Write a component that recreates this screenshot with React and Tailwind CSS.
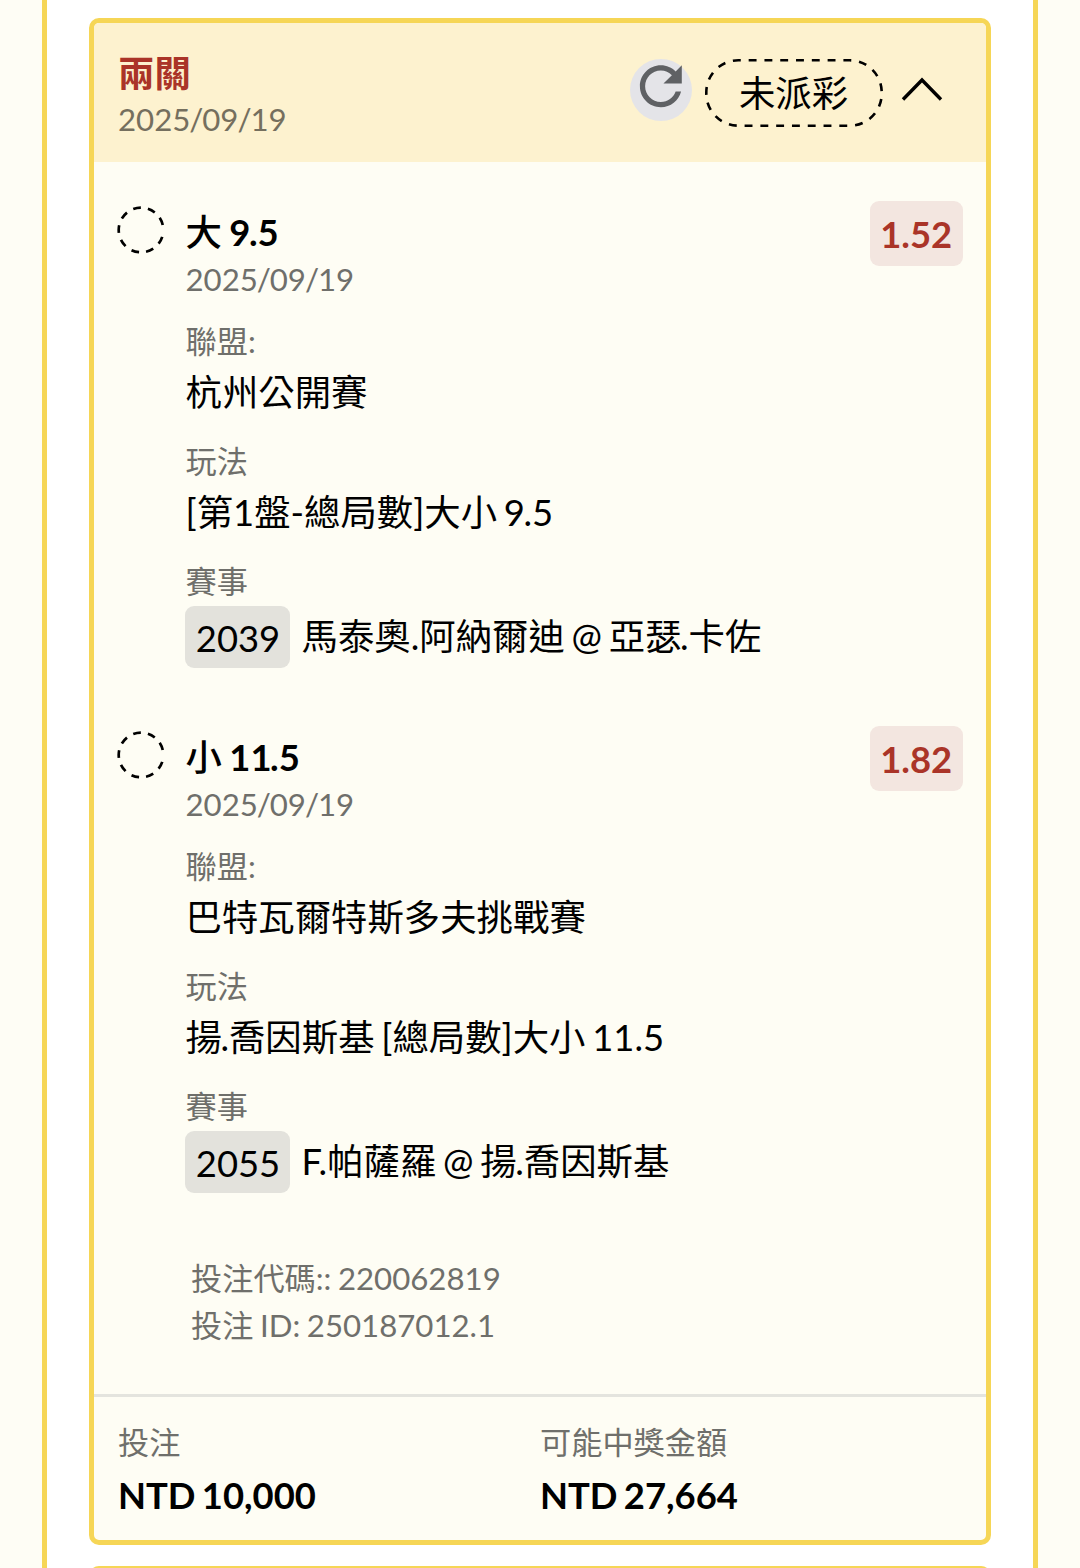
const YELLOW_BORDER = "border-[#f6d656]";

// "|" in a text marks a kerning point.
const bets = [
  {
    side: "大",
    line: "9|.5",
    date: "2025/09/19",
    odds: "1.52",
    league: "杭州公開賽",
    market: "[第1盤-總局數]大小 9|.5",
    code: "2039",
    match: "馬泰奧.阿納爾迪 @ 亞瑟|.卡佐",
  },
  {
    side: "小",
    line: "11|.5",
    date: "2025/09/19",
    odds: "1.82",
    league: "巴特瓦爾特斯多夫挑戰賽",
    market: "揚|.喬因斯基 [總局數]大小 11.5",
    code: "2055",
    match: "F.帕薩羅 @ 揚|.喬因斯基",
  },
];

function Kerned({ text }) {
  return text.split("|").map((part, i) => (
    <span key={i} className={i > 0 ? "-ml-[1.5px]" : ""}>
      {part}
    </span>
  ));
}

function DateText({ value }) {
  return value.split("/").map((part, i) => (
    <span key={i}>
      {i > 0 && <span className="-mx-[1.1px]">/</span>}
      {part}
    </span>
  ));
}

function RefreshIcon() {
  return (
    <svg viewBox="0 0 62 62" className="-mt-[6px] h-[62px] w-[62px]">
      <circle cx="31" cy="31" r="31" fill="#e4e4e8" />
      <path
        transform="translate(-0.6 -4.2) scale(2.62)"
        fill="#5f6164"
        d="M17.65 6.35C16.2 4.9 14.21 4 12 4c-4.42 0-7.99 3.58-7.99 8s3.57 8 7.99 8c3.73 0 6.84-2.55 7.73-6h-2.08c-.82 2.33-3.04 4-5.65 4-3.31 0-6-2.69-6-6s2.69-6 6-6c1.66 0 3.14.69 4.22 1.78L13 11h7V4l-2.35 2.35z"
      />
    </svg>
  );
}

function PendingRing() {
  return (
    <svg viewBox="0 0 48 48" className="-mt-[0.5px] -ml-[0.5px] h-12 w-12">
      <circle
        cx="24"
        cy="24"
        r="22.3"
        fill="none"
        stroke="#000"
        strokeWidth="2.7"
        pathLength="360"
        strokeDasharray="0 18 20 18.6 20 18.6 20 18.6 20 18.6 20 18.6 20 18.6 20 18.6 20 18.6 20 40"
      />
    </svg>
  );
}

function StatusPill() {
  return (
    <div className="relative ml-[13px] flex h-[68px] w-[178px] items-center justify-center">
      <svg viewBox="0 0 178 68" className="absolute inset-0 h-full w-full">
        <rect x="1.3" y="1.3" width="175.4" height="65.4" rx="32" fill="none" stroke="#000" strokeWidth="2.6" pathLength="432" strokeDasharray="8 8" strokeDashoffset="5.5" />
      </svg>
      <span className="relative text-[36.4px] leading-[47px]">未派彩</span>
    </div>
  );
}

function Field({ label, children }) {
  return (
    <div>
      <div className="text-[31.2px] leading-[46px] text-[#6f6f6b]">{label}</div>
      {children}
    </div>
  );
}

function Bet({ bet }) {
  return (
    <div className="flex h-[525px] items-start pr-[23px] pl-[23px]">
      <PendingRing />
      <div className="mt-[2px] ml-[21px] flex-1">
        <div className="text-[36.4px] leading-[48px] font-bold [word-spacing:-1.4px]">
          <span className="font-medium">{bet.side}</span> <Kerned text={bet.line} />
        </div>
        <div className="text-[31.2px] leading-[46px] text-[#6f6f6b]">
          <DateText value={bet.date} />
        </div>
        <div className="mt-[16px] flex flex-col gap-[18px] whitespace-nowrap">
          <Field label="聯盟:">
            <div className="pt-px text-[36.4px] leading-[55px]">{bet.league}</div>
          </Field>
          <Field label="玩法">
            <div className="pt-px text-[36.4px] leading-[55px]">
              <Kerned text={bet.market} />
            </div>
          </Field>
          <Field label="賽事">
            <div className="mt-[1.5px] flex h-[62px] items-center text-[36.4px]">
              <span className="mr-[11.5px] -ml-[0.5px] h-[62px] w-[105px] rounded-[9px] bg-[#e3e2dc] pl-px text-center leading-[65px]">{bet.code}</span>
              <span className="leading-[63px]">
                <Kerned text={bet.match} />
              </span>
            </div>
          </Field>
        </div>
      </div>
      <div className="-mt-[5px] h-[65px] w-[93.5px] rounded-[9px] bg-[#f3e6e0] text-center text-[36.4px] leading-[67px] font-bold text-[#aa3428]">
        {bet.odds}
      </div>
    </div>
  );
}

function Total({ label, value }) {
  return (
    <div className="w-[422px]">
      <div className="text-[31.2px] leading-[47px] text-[#6f6f6b]">{label}</div>
      <div className="mt-[2px] text-[36.4px] leading-[55px] font-bold">{value}</div>
    </div>
  );
}

export default function App() {
  return (
    <div className="h-[1568px] overflow-hidden bg-[#fefdf5] px-[42px] font-['Lato','Noto_Sans_CJK_TC',sans-serif] text-black [word-spacing:-2.6px]">
      <div className={`h-full overflow-hidden border-x-[5px] ${YELLOW_BORDER} bg-white px-[42px] pt-[18px]`}>
        <div className={`h-[1527px] overflow-hidden rounded-[10px] border-[5px] ${YELLOW_BORDER} bg-[#fefdf4]`}>
          <div className="flex h-[139px] items-start bg-[#fdf2cf] pt-7 pr-[43.5px] pl-6">
            <div className="flex-1">
              <div className="text-[36.4px] leading-[45px] font-bold text-[#aa3428]">兩關</div>
              <div className="text-[31.2px] leading-[46px] text-[#756f5e]">
                <DateText value="2025/09/19" />
              </div>
            </div>
            <div className="mt-[8px] flex items-center">
              <RefreshIcon />
              <StatusPill />
              <svg viewBox="0 0 42 26" className="-mt-[8px] ml-[18px] h-[26px] w-[42px]">
                <path d="M2 23.5 21 4 40 23.5" fill="none" stroke="#000" strokeWidth="3.4" />
              </svg>
            </div>
          </div>
          <div className="flex h-[1232px] flex-col pt-11">
            {bets.map((bet) => (
              <Bet key={bet.code} bet={bet} />
            ))}
            <div className="-mt-px pl-[97px] text-[31.2px] leading-[46.5px] text-[#6f6f6b] [word-spacing:-1.4px]">
              <div>投注代碼:: 220062819</div>
              <div>投注 ID: 250187012.1</div>
            </div>
          </div>
          <div className="flex border-t-[3px] border-[#e4e4de] pt-[22px] pl-6">
            <Total label="投注" value="NTD 10,000" />
            <Total label="可能中獎金額" value="NTD 27,664" />
          </div>
        </div>
        <div className={`mt-[21px] h-10 rounded-[10px] border-[5px] ${YELLOW_BORDER}`} />
      </div>
    </div>
  );
}
